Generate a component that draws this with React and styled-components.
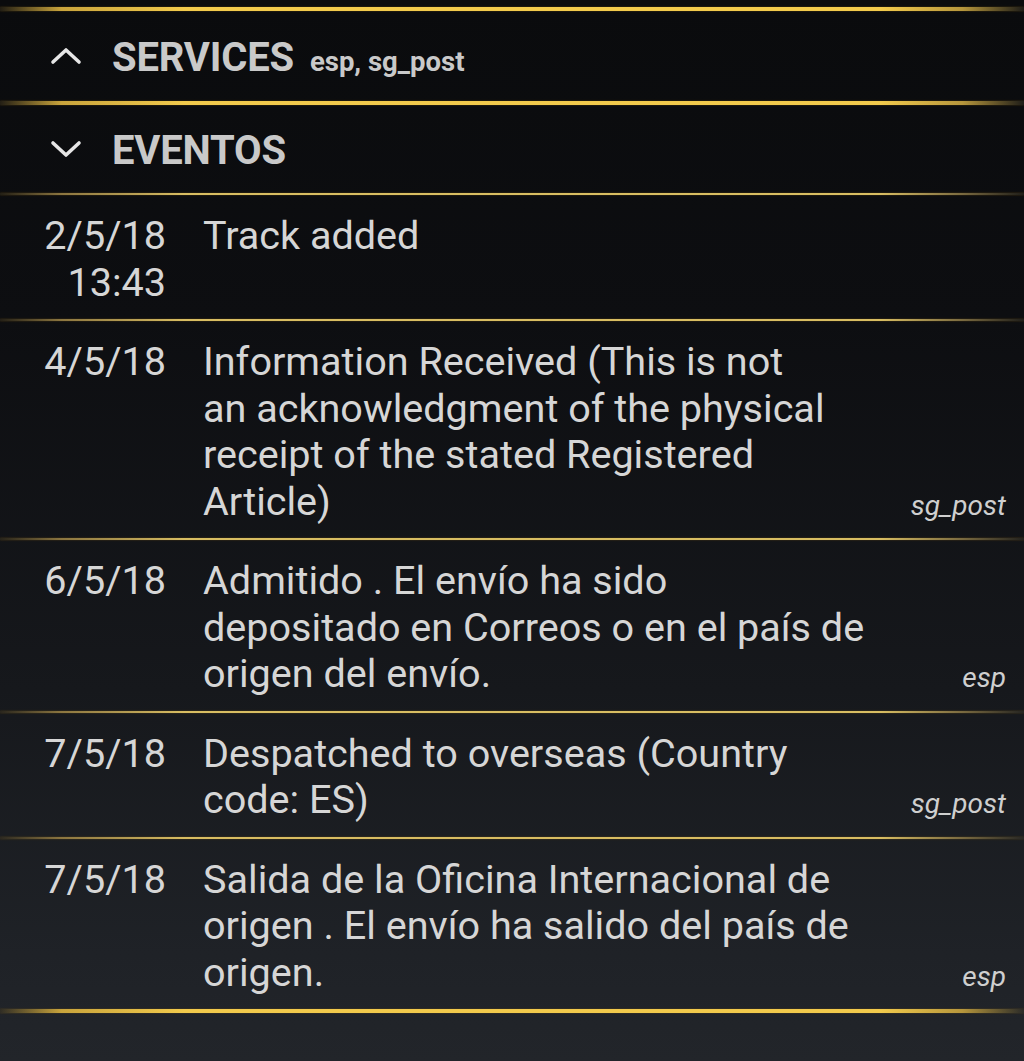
import React from 'react'
import styled, { createGlobalStyle } from 'styled-components'

const GlobalStyle = createGlobalStyle`
  html, body {
    margin: 0;
    padding: 0;
    background: #0b0c0e;
  }
  * { box-sizing: border-box; }
`;

const Page = styled.div`
  width: 1024px;
  min-height: 1061px;
  padding-top: 7px;
  background: linear-gradient(180deg, #0a0b0d 0%, #0d0e11 30%, #16181c 65%, #1f2227 90%, #22252a 100%);
  font-family: Roboto, "Liberation Sans", sans-serif;
  color: #d8d8d8;
  overflow: hidden;
`;

const GoldRule = styled.div`
  height: ${props => props.thick ? "4px" : "2px"};
  background: linear-gradient(90deg,
    rgba(70, 58, 30, 0.4) 0%,
    ${props => props.thick ? "#c9a43c" : "#8c7640"} 6%,
    ${props => props.thick ? "#f2ca4c" : "#d8bd62"} 18%,
    ${props => props.thick ? "#f2ca4c" : "#d8bd62"} 86%,
    ${props => props.thick ? "#b6963c" : "#7a6a40"} 94%,
    rgba(60, 55, 40, 0.4) 100%);
  box-shadow: 0 0 2px rgba(120, 90, 20, 0.6);
`;

const SectionHeader = styled.div`
  height: ${props => props.short ? "88px" : "90px"};
  display: flex;
  align-items: center;
  padding-left: 48px;
`;

const Chevron = styled.svg`
  width: 36px;
  height: 36px;
  flex: none;
  color: #e6e6e6;
`;

const HeaderTitle = styled.div`
  display: flex;
  align-items: baseline;
  margin-left: 28px;
  margin-top: 2px;
`;

const TitleText = styled.span`
  font-size: 40px;
  font-weight: 700;
  color: #c9c9c9;
  letter-spacing: -0.2px;
`;

const TitleMeta = styled.span`
  font-size: 27.5px;
  font-weight: 700;
  color: #c9c9c9;
  margin-left: 16px;
`;

const EventRow = styled.div`
  display: flex;
  align-items: flex-start;
  padding: 18px 18px 13px 0;
  font-size: 39.6px;
  line-height: 46.5px;
`;

const DateCell = styled.div`
  width: 166px;
  flex: none;
  text-align: right;
  color: #d6d6d6;
`;

const Body = styled.div`
  flex: 1;
  display: flex;
  align-items: last baseline;
  justify-content: space-between;
  margin-left: 37px;
`;

const Description = styled.div`
  color: #d6d6d6;
`;

const Source = styled.div`
  flex: none;
  margin-left: 40px;
  font-size: 28px;
  font-style: italic;
  color: #cfcfcf;
  line-height: 30px;
`;

const ChevronIcon = ({ up }) => (
  <Chevron viewBox="0 0 36 36" fill="none">
    <path
      d={up ? "M5 24 L18 12 L31 24" : "M5 12 L18 24 L31 12"}
      stroke="currentColor"
      strokeWidth="3.6"
      strokeLinecap="round"
      strokeLinejoin="round"
    />
  </Chevron>
);

const events = [
  { date: ["2/5/18", "13:43"], lines: ["Track added"], source: "" },
  {
    date: ["4/5/18"],
    lines: [
      "Information Received (This is not",
      "an acknowledgment of the physical",
      "receipt of the stated Registered",
      "Article)",
    ],
    source: "sg_post",
  },
  {
    date: ["6/5/18"],
    lines: [
      "Admitido . El envío ha sido",
      "depositado en Correos o en el país de",
      "origen del envío.",
    ],
    source: "esp",
  },
  {
    date: ["7/5/18"],
    lines: ["Despatched to overseas (Country", "code: ES)"],
    source: "sg_post",
  },
  {
    date: ["7/5/18"],
    lines: [
      "Salida de la Oficina Internacional de",
      "origen . El envío ha salido del país de",
      "origen.",
    ],
    source: "esp",
  },
];

const App = () => {
  return (
    <Page>
      <GlobalStyle />
      <GoldRule thick />
      <SectionHeader>
        <ChevronIcon up />
        <HeaderTitle>
          <TitleText>SERVICES</TitleText>
          <TitleMeta>esp, sg_post</TitleMeta>
        </HeaderTitle>
      </SectionHeader>
      <GoldRule thick />
      <SectionHeader short>
        <ChevronIcon />
        <HeaderTitle>
          <TitleText>EVENTOS</TitleText>
        </HeaderTitle>
      </SectionHeader>
      {events.map((ev, i) => (
        <React.Fragment key={i}>
          <GoldRule />
          <EventRow>
            <DateCell>
              {ev.date.map(d => <div key={d}>{d}</div>)}
            </DateCell>
            <Body>
              <Description>
                {ev.lines.map(l => <div key={l}>{l}</div>)}
              </Description>
              {ev.source && <Source>{ev.source}</Source>}
            </Body>
          </EventRow>
        </React.Fragment>
      ))}
      <GoldRule thick />
    </Page>
  )
}

export default App
